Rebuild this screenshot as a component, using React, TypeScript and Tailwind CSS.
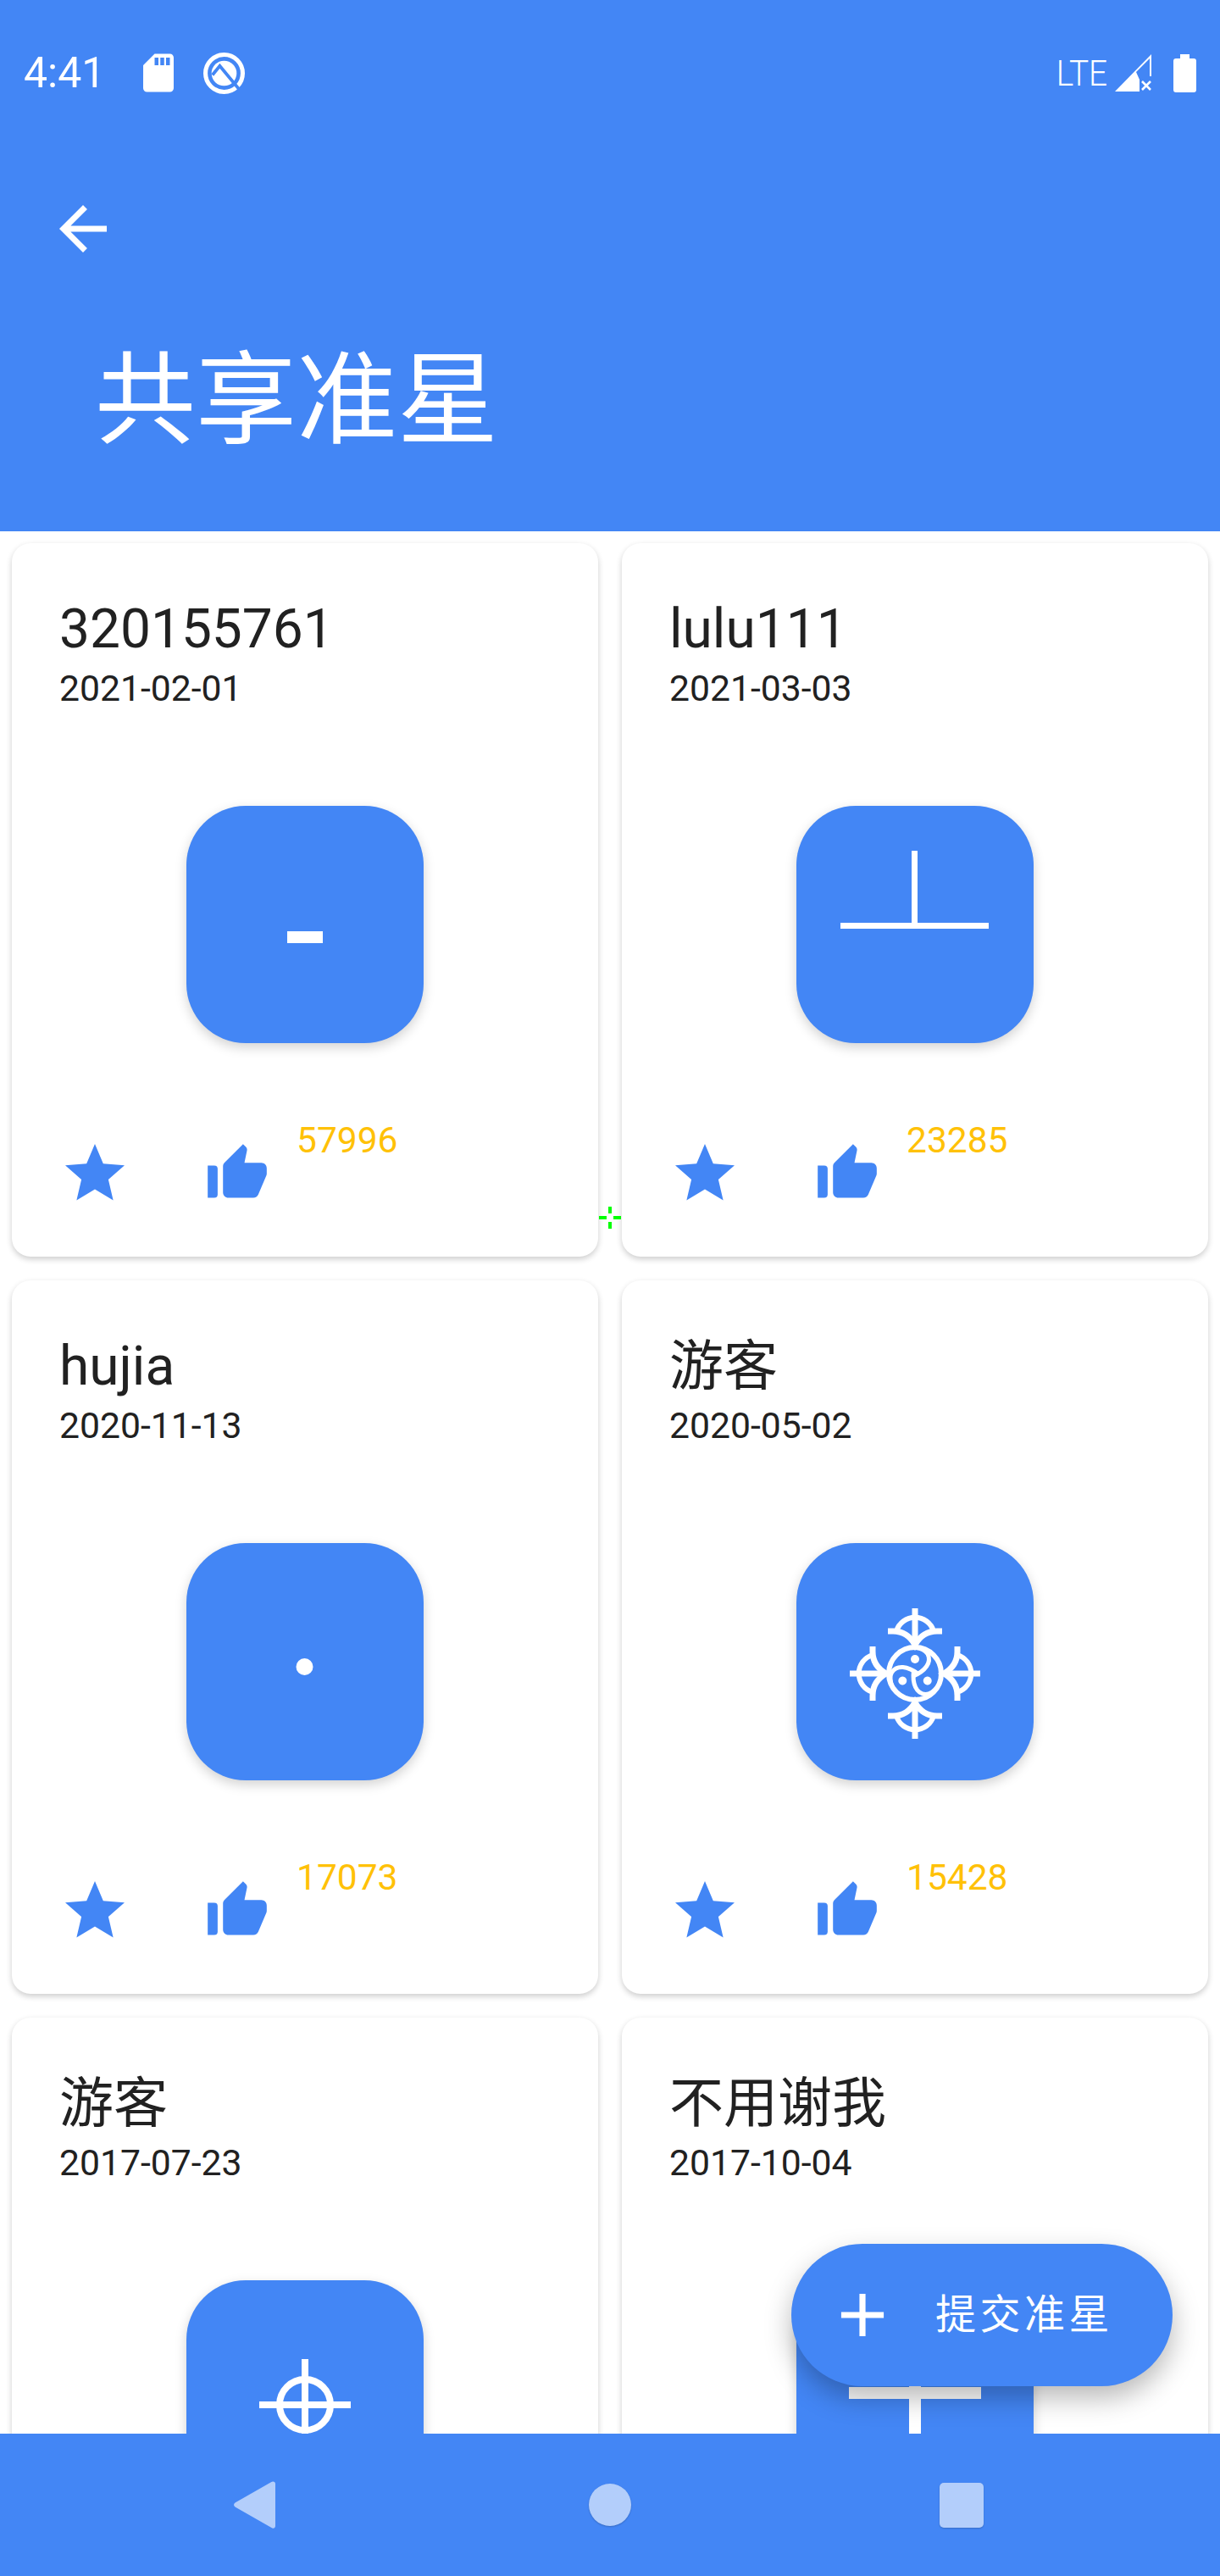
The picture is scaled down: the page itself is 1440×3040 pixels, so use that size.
import React from "react";

const BLUE = "#4386f5";

function Glyph({ kind }: { kind: string }) {
  return (
    <svg viewBox="0 0 280 280" className="w-[280px] h-[280px] block" fill="#fff">
      {kind === "dash" && <rect x="119" y="148" width="42" height="14" />}
      {kind === "t" && (
        <g>
          <rect x="136" y="53" width="7" height="86" />
          <rect x="52" y="138" width="175" height="7" />
        </g>
      )}
      {kind === "dot" && <circle cx="139.5" cy="146" r="10" />}
      {kind === "tri" && (
        <g transform="translate(140 154)" fill="none" stroke="#fff" strokeWidth="6">
          <circle cx="0" cy="0" r="31" />
          {[0, 120, 240].map((a) => (
            <g key={a} transform={`rotate(${a})`}>
              <path d="M-2 3 C 12 -3 20 -13 15 -23 C 12 -28 6 -30 0 -31" strokeWidth="5" />
              <circle cx="0" cy="-17" r="5" fill="#fff" stroke="none" />
            </g>
          ))}
          {[0, 90, 180, 270].map((a) => (
            <g key={a} transform={`rotate(${a})`}>
              <path d="M0 -77 V-34" strokeWidth="7" />
              <path d="M-32 -50 H-26 Q-9 -50 0 -34 Q9 -50 26 -50 H32" strokeWidth="7" />
              <path d="M-22 -50 A23 23 0 0 1 22 -50" strokeWidth="6" />
            </g>
          ))}
        </g>
      )}
      {kind === "cross" && (
        <g>
          <circle cx="140" cy="147" r="30" fill="none" stroke="#fff" strokeWidth="8" />
          <rect x="136" y="93" width="8" height="108" />
          <rect x="86" y="143" width="108" height="8" />
        </g>
      )}
      {kind === "plus" && (
        <g>
          <rect x="133" y="60" width="14" height="180" />
          <rect x="62" y="126" width="156" height="14" />
        </g>
      )}
    </svg>
  );
}

function Card({ name, date, likes, kind }: { name: string; date: string; likes?: string; kind: string }) {
  return (
    <div className="h-[842px] bg-white rounded-[22px] pt-16 flex flex-col shadow-[0_3px_7px_rgba(0,0,0,0.2)]">
      <div className="pl-14 text-[64px] leading-[75px] text-[#212121]">{name}</div>
      <div className="pl-14 mt-[7px] text-[42.7px] leading-[50px] text-[#212121]">{date}</div>
      <div className="w-[280px] h-[280px] mx-auto mt-[114px] rounded-[70px] bg-[#4386f5] shadow-[0_5px_14px_rgba(0,0,0,0.18)]">
        <Glyph kind={kind} />
      </div>
      <div className="flex items-start pl-14 mt-[90px]">
        <svg viewBox="0 0 24 24" fill={BLUE} className="w-[84px] h-[84px] mt-[22px]">
          <path d="M12 17.27L18.18 21l-1.64-7.03L22 9.24l-7.19-.61L12 2 9.19 8.63 2 9.24l5.46 4.73L5.82 21z" />
        </svg>
        <svg viewBox="0 0 24 24" fill={BLUE} className="w-[76px] h-[76px] mt-[26px] ml-[88px]">
          <path d="M1 9h2.4A1.3 1.3 0 0 1 4.7 10.3v9.4A1.3 1.3 0 0 1 3.4 21H1z" />
          <path d="M23 10c0-1.1-.9-2-2-2h-6.31l.95-4.57.03-.32c0-.41-.17-.79-.44-1.06L14.17 1 7.59 7.59C7.02 8.1 6.7 8.6 6.7 9.2V19c0 1.1.9 2 2 2H18c.83 0 1.54-.5 1.84-1.22l3.02-7.05c.09-.23.14-.47.14-.73v-2z" />
        </svg>
        <div className="ml-8 text-[42.5px] leading-[49px] text-[#ffc107]">{likes}</div>
      </div>
    </div>
  );
}

const cards = [
  { name: "320155761", date: "2021-02-01", likes: "57996", kind: "dash" },
  { name: "lulu111", date: "2021-03-03", likes: "23285", kind: "t" },
  { name: "hujia", date: "2020-11-13", likes: "17073", kind: "dot" },
  { name: "游客", date: "2020-05-02", likes: "15428", kind: "tri" },
  { name: "游客", date: "2017-07-23", likes: "", kind: "cross" },
  { name: "不用谢我", date: "2017-10-04", likes: "", kind: "plus" },
];

export default function App() {
  return (
    <div className="relative w-[1440px] h-[3040px] overflow-hidden bg-white flex flex-col [font-family:Roboto,'Noto_Sans_CJK_SC',sans-serif]">
      <header className="h-[627px] shrink-0 bg-[#4386f5] text-white">
        <div className="h-[172px] flex items-center pl-7 pr-7">
          <span className="text-[50px] leading-none w-[132px]">4:41</span>
          <svg viewBox="0 0 24 24" fill="#fff" className="w-[54px] h-[54px]">
            <path d="M18 2h-8L4.02 8 4 20c0 1.1.9 2 2 2h12c1.1 0 2-.9 2-2V4c0-1.1-.9-2-2-2zm-6 6h-2V4h2v4zm3 0h-2V4h2v4zm3 0h-2V4h2v4z" />
          </svg>
          <svg viewBox="0 0 48 48" className="w-[49px] h-[49px] ml-[26px]">
            <circle cx="24" cy="24" r="21.5" fill="none" stroke="#fff" strokeWidth="5" />
            <circle cx="24" cy="24" r="14.5" fill="#fff" />
            <path d="M10.5 26L19 15.5 41 42" fill="none" stroke={BLUE} strokeWidth="3.8" />
          </svg>
          <span className="ml-auto text-[43px] leading-none font-light scale-x-[0.9] origin-right mr-[9px]">LTE</span>
          <svg viewBox="0 0 43 44" fill="#fff" className="w-[43px] h-[44px]">
            <path d="M0 44L43 0V26H41V5L25 21 29 30V44Z" />
            <path d="M32 32L42 42M42 32L32 42" stroke="#fff" strokeWidth="2.6" fill="none" />
          </svg>
          <svg viewBox="0 0 27 45" fill="#fff" className="w-[27px] h-[45px] ml-[26px]">
            <path d="M8 0h11v5h5a3 3 0 0 1 3 3v34a3 3 0 0 1-3 3H3a3 3 0 0 1-3-3V8a3 3 0 0 1 3-3h5z" />
          </svg>
        </div>
        <svg viewBox="0 0 24 24" fill="#fff" className="w-[84px] h-[84px] ml-14 mt-14">
          <path d="M20 11H7.83l5.59-5.59L12 4l-8 8 8 8 1.41-1.41L7.83 13H20v-2z" />
        </svg>
        <div className="ml-[112px] mt-[97px] text-[119px] leading-[130px]">共享准星</div>
      </header>

      <main className="flex-1 min-h-0 overflow-hidden px-3.5 pt-3.5">
        <div className="grid grid-cols-2 gap-7">
          {cards.map((c, i) => (
            <Card key={i} {...c} />
          ))}
        </div>
      </main>

      <nav className="h-[168px] shrink-0 bg-[#4386f5] flex items-center pl-[276px]">
        <svg viewBox="0 0 49 56" fill="#b3cefb" className="w-[49px] h-[56px]">
          <path d="M1.5 25.5L44 1.2C46.5 -0.5 49 1 49 3V53C49 55.5 46.5 56.5 44 54.8L1.5 30.5C-.5 29 -.5 27 1.5 25.5Z" />
        </svg>
        <div className="w-[50px] h-[50px] ml-[370px] rounded-full bg-[#b3cefb] shadow-[0_1px_2px_rgba(0,0,0,0.2)]" />
        <div className="w-[52px] h-[53px] ml-[364px] rounded-[5px] bg-[#b3cefb] shadow-[0_1px_2px_rgba(0,0,0,0.2)]" />
      </nav>

      <svg viewBox="0 0 26 26" fill="#00ff00" className="absolute left-[707px] top-[1424px] w-[26px] h-[26px]">
        <rect x="11" y="0" width="4" height="8" />
        <rect x="11" y="18" width="4" height="8" />
        <rect x="0" y="11" width="9" height="4" />
        <rect x="17" y="11" width="9" height="4" />
      </svg>

      <button className="absolute left-[934px] top-[2648px] w-[450px] h-[168px] rounded-full bg-[#4386f5] text-white flex items-center pl-[41px] shadow-[0_14px_32px_rgba(0,0,0,0.28)]">
        <svg viewBox="0 0 24 24" fill="#fff" className="w-[86px] h-[86px]">
          <path d="M19 13h-6v6h-2v-6H5v-2h6V5h2v6h6v2z" />
        </svg>
        <span className="ml-[43px] text-[48px] leading-none tracking-[4.5px]">提交准星</span>
      </button>
    </div>
  );
}
